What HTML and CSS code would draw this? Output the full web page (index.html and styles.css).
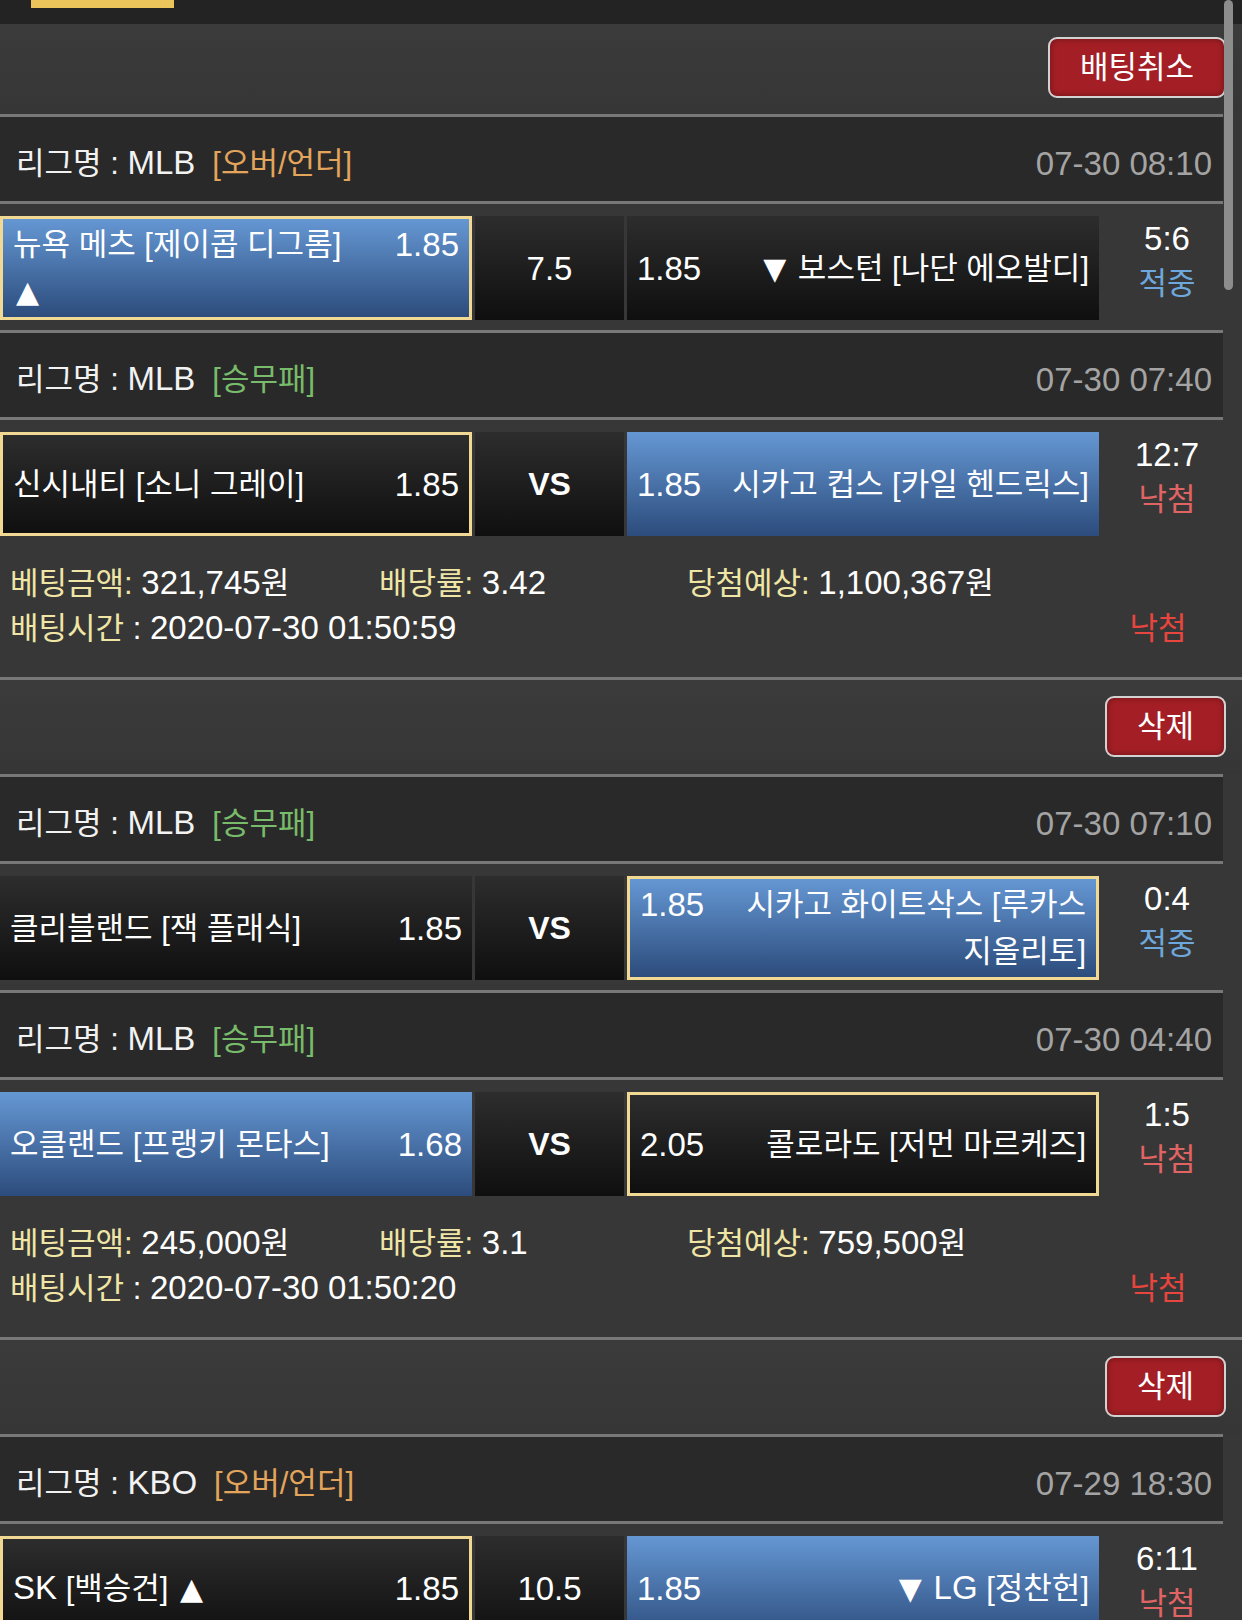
FILE: index.html
```html
<!DOCTYPE html>
<html lang="ko">
<head>
<meta charset="utf-8">
<title>배팅내역</title>
<link rel="stylesheet" href="styles.css">
</head>
<body>
<div class="topbar"><span class="topbar-tab"></span></div>

<section class="bet">
  <div class="actions actions-first"><button class="btn">배팅취소</button></div>

  <div class="game">
    <div class="league"><span class="league-name">리그명 : <span class="num">MLB</span></span><span class="type type-ou">[오버/언더]</span><span class="time">07-30 08:10</span></div>
    <div class="match">
      <div class="cell cell-win cell-pick"><div class="team"><span class="odds-r">1.85</span>뉴욕 메츠 [제이콥 디그롬]<br><span class="tri">▲</span></div></div>
      <div class="cell cell-mid">7.5</div>
      <div class="cell"><div class="team team-away"><span class="odds-l">1.85</span><span class="tri">▼</span> 보스턴 [나단 에오발디]</div></div>
      <div class="score"><div class="score-num">5:6</div><div class="res-hit">적중</div></div>
    </div>
  </div>

  <div class="game">
    <div class="league"><span class="league-name">리그명 : <span class="num">MLB</span></span><span class="type type-wdl">[승무패]</span><span class="time">07-30 07:40</span></div>
    <div class="match">
      <div class="cell cell-pick"><div class="team"><span class="odds-r">1.85</span>신시내티 [소니 그레이]</div></div>
      <div class="cell cell-mid vs">VS</div>
      <div class="cell cell-win"><div class="team team-away"><span class="odds-l">1.85</span>시카고 컵스 [카일 헨드릭스]</div></div>
      <div class="score"><div class="score-num">12:7</div><div class="res-miss">낙첨</div></div>
    </div>
  </div>

  <div class="summary">
    <div><span class="label">베팅금액:</span> <span class="num">321,745</span>원</div>
    <div><span class="label">배당률:</span> <span class="num">3.42</span></div>
    <div><span class="label">당첨예상:</span> <span class="num">1,100,367</span>원</div>
    <div></div>
    <div class="bet-time"><span class="label">배팅시간</span> : <span class="num">2020-07-30 01:50:59</span></div>
    <div class="summary-result">낙첨</div>
  </div>
</section>

<section class="bet">
  <div class="actions"><button class="btn">삭제</button></div>

  <div class="game">
    <div class="league"><span class="league-name">리그명 : <span class="num">MLB</span></span><span class="type type-wdl">[승무패]</span><span class="time">07-30 07:10</span></div>
    <div class="match">
      <div class="cell"><div class="team"><span class="odds-r">1.85</span>클리블랜드 [잭 플래식]</div></div>
      <div class="cell cell-mid vs">VS</div>
      <div class="cell cell-win cell-pick"><div class="team team-away"><span class="odds-l">1.85</span>시카고 화이트삭스 [루카스<br>지올리토]</div></div>
      <div class="score"><div class="score-num">0:4</div><div class="res-hit">적중</div></div>
    </div>
  </div>

  <div class="game">
    <div class="league"><span class="league-name">리그명 : <span class="num">MLB</span></span><span class="type type-wdl">[승무패]</span><span class="time">07-30 04:40</span></div>
    <div class="match">
      <div class="cell cell-win"><div class="team"><span class="odds-r">1.68</span>오클랜드 [프랭키 몬타스]</div></div>
      <div class="cell cell-mid vs">VS</div>
      <div class="cell cell-pick"><div class="team team-away"><span class="odds-l">2.05</span>콜로라도 [저먼 마르케즈]</div></div>
      <div class="score"><div class="score-num">1:5</div><div class="res-miss">낙첨</div></div>
    </div>
  </div>

  <div class="summary">
    <div><span class="label">베팅금액:</span> <span class="num">245,000</span>원</div>
    <div><span class="label">배당률:</span> <span class="num">3.1</span></div>
    <div><span class="label">당첨예상:</span> <span class="num">759,500</span>원</div>
    <div></div>
    <div class="bet-time"><span class="label">배팅시간</span> : <span class="num">2020-07-30 01:50:20</span></div>
    <div class="summary-result">낙첨</div>
  </div>
</section>

<section class="bet">
  <div class="actions"><button class="btn">삭제</button></div>

  <div class="game">
    <div class="league"><span class="league-name">리그명 : <span class="num">KBO</span></span><span class="type type-ou">[오버/언더]</span><span class="time">07-29 18:30</span></div>
    <div class="match">
      <div class="cell cell-pick"><div class="team"><span class="odds-r">1.85</span><span class="num">SK</span> [백승건] <span class="tri">▲</span></div></div>
      <div class="cell cell-mid">10.5</div>
      <div class="cell cell-win"><div class="team team-away"><span class="odds-l">1.85</span><span class="tri">▼</span> <span class="num">LG</span> [정찬헌]</div></div>
      <div class="score"><div class="score-num">6:11</div><div class="res-miss">낙첨</div></div>
    </div>
  </div>
</section>

<div class="scrollbar"></div>
</body>
</html>
```

FILE: styles.css
```css
* { box-sizing: border-box; }

html, body { margin: 0; padding: 0; }

body {
  position: relative;
  width: 1242px;
  height: 1620px;
  overflow: hidden;
  background: #373737;
  color: #fff;
  font-family: "Liberation Sans", "Noto Sans CJK KR", sans-serif;
  font-size: 31px;
  font-feature-settings: "palt" 1;
}

.num {
  font-size: 33px;
  line-height: 1;
}

.odds-r,
.odds-l,
.time,
.score-num {
  font-size: 33px;
}

.tri {
  margin: 0 3px;
  font-family: "DejaVu Sans", sans-serif;
  font-size: 30px;
  line-height: 1;
}

.topbar {
  height: 24px;
  padding-left: 31px;
  background: #232323;
}

.topbar-tab {
  display: block;
  width: 143px;
  height: 8px;
  background: #ebc45b;
}

.actions {
  height: 94px;
  padding: 16px 16px 0 0;
  display: flex;
  justify-content: flex-end;
  align-items: flex-start;
  background: linear-gradient(#3b3b3b, #363636);
}

.actions-first {
  height: 90px;
  padding-top: 13px;
}

.btn {
  height: 61px;
  padding: 0 30px;
  border: 2px solid #d2d2d2;
  border-radius: 9px;
  background: #a31f25;
  color: #fff;
  font: inherit;
  line-height: 57px;
  box-shadow: inset 0 0 6px rgba(0, 0, 0, 0.35);
}

.league {
  width: 1223px;
  height: 90px;
  padding: 8px 11px 0 16px;
  display: flex;
  align-items: center;
  line-height: 45px;
  background: #292929;
  border-top: 3px solid #787878;
  border-bottom: 3px solid #787878;
}

.league-name { color: #f2f2f2; }
.type { margin-left: 17px; }
.type-ou { color: #e3a45b; }
.type-wdl { color: #78bb6a; }
.time { margin-left: auto; color: #a4a4a4; }

.match {
  display: grid;
  grid-template-columns: 472px 149px 472px 130px;
  column-gap: 3px;
  padding: 12px 0 10px;
}

.cell {
  height: 104px;
  padding: 0 10px;
  display: flex;
  align-items: center;
  line-height: 47px;
  background: linear-gradient(#2d2d2d, #0f0f0f);
}

.cell-win { background: linear-gradient(#6597d3, #2c4c7c); }
.cell-pick { border: 3px solid #f1d993; }

.cell-mid {
  justify-content: center;
  font-size: 33px;
}

.vs {
  font-size: 32px;
  font-weight: bold;
}

.team { width: 100%; }
.team-away { text-align: right; }
.odds-r { float: right; }
.odds-l { float: left; }

.score {
  text-align: center;
  line-height: 45px;
}

.res-hit { color: #6ea7dc; }
.res-miss { color: #e06464; }

.summary {
  display: grid;
  grid-template-columns: 369px 308px 1fr 130px;
  padding: 15px 19px 26px 10px;
  line-height: 45px;
  border-bottom: 3px solid #787878;
}

.label { color: #efe6a6; }
.bet-time { grid-column: 1 / 4; }
.summary-result { text-align: center; color: #e8453f; }

.scrollbar {
  position: absolute;
  left: 1224px;
  top: 0;
  width: 9px;
  height: 290px;
  border-radius: 5px;
  background: #8d8d8d;
}
```
